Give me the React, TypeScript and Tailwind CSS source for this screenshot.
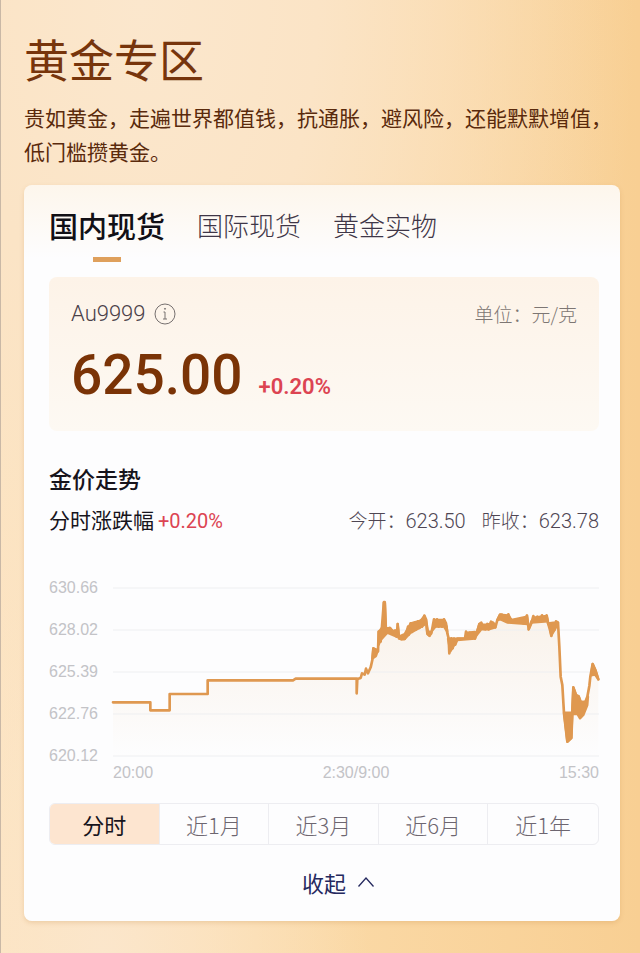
import React, { useState } from 'react';

const MARKETS = ['国内现货', '国际现货', '黄金实物'];
const RANGES = ['分时', '近1月', '近3月', '近6月', '近1年'];
const PRICES = ['630.66', '628.02', '625.39', '622.76', '620.12'];

// Chart units: 1458 wide, 504 high, a grid line every 126
const NIGHT =
  '0,343 112,343 112,367 170,367 170,318 284,318 284,277 540,277 548,272 731,272';

const DAY =
  '731,316 733,273 743,270 747,256 755,260 759,242 765,256 773,238 778,216 781,181 787,190 795,190 797,131 803,161 806,121 811,126 813,42 815,42 818,121 823,131 831,120 839,130 847,128 851,146 854,108 858,151 865,154 875,153 881,136 885,116 887,140 893,106 897,132 905,104 909,124 915,100 919,120 923,98 927,116 931,96 934,83 939,94 943,136 949,142 955,136 957,126 963,94 967,116 972,94 977,116 984,102 987,116 993,94 999,106 1003,136 1007,151 1009,196 1015,151 1019,181 1023,152 1027,170 1033,152 1056,152 1059,131 1065,152 1071,134 1077,152 1083,134 1086,152 1093,131 1099,108 1105,104 1111,122 1117,124 1123,108 1127,124 1134,101 1141,106 1147,118 1153,96 1161,80 1167,80 1171,92 1179,98 1186,79 1193,98 1201,104 1211,98 1217,104 1226,94 1231,106 1239,88 1242,82 1247,124 1255,106 1261,84 1267,98 1273,86 1281,98 1287,82 1293,96 1301,82 1305,106 1311,116 1315,144 1321,106 1324,126 1329,100 1335,104 1339,176 1343,266 1348,291 1353,376 1363,461 1375,450 1378,376 1381,298 1389,321 1397,325 1403,342 1417,342 1423,326 1429,294 1432,266 1439,228 1447,246 1456,274';

// Stretches where the ticks are so dense that the line closes up
const DENSE = [
  '1353,374 1378,374 1375,450 1363,461',
  '1381,298 1389,321 1397,325 1403,342 1417,342 1425,326 1423,351 1411,381 1401,391 1393,378 1377,378',
  '1434,262 1439,228 1447,246 1456,274 1446,260',
  '781,181 795,186 789,204 778,212',
  '797,131 806,121 812,44 816,44 819,121 831,120 839,130 847,128 851,146 823,134 803,156 797,170',
  '854,108 858,151 875,153 893,134 919,120 934,110 934,84 923,98 893,106 875,138 858,146',
  '939,94 945,130 955,132 950,144 943,138',
  '959,126 965,96 993,96 1001,116 1003,132 993,116 967,116',
  '1005,152 1056,152 1062,134 1086,132 1086,152 1033,156 1012,190',
  '1086,148 1099,108 1111,110 1123,110 1141,104 1147,118 1127,124 1105,124',
  '1153,96 1161,80 1186,82 1196,96 1242,86 1245,108 1184,104 1163,94',
  '1247,124 1255,100 1267,88 1301,84 1305,100 1255,104',
  '1305,106 1321,104 1335,104 1327,122 1315,142',
];

const TrendChart: React.FC = () => (
  <svg viewBox="0 0 1458 504" className="block w-full overflow-visible" role="img" aria-label="金价走势">
    <defs>
      <linearGradient id="area" x1="0" y1="0" x2="0" y2="1">
        <stop offset="0" stopColor="#f9f1e8" />
        <stop offset="1" stopColor="#fdfdfe" />
      </linearGradient>
    </defs>
    <polygon points={`0,504 ${NIGHT} ${DAY} 1456,504`} fill="url(#area)" />
    {[0, 126, 252, 378, 504].map((y) => (
      <line key={y} x1="0" x2="1458" y1={y} y2={y} stroke="#eeeff1" strokeWidth="3" />
    ))}
    <g stroke="#df9850" strokeLinejoin="round" strokeLinecap="round">
      <polyline points={`${NIGHT} ${DAY}`} fill="none" strokeWidth="8" />
      {DENSE.map((points) => (
        <polygon key={points} points={points} fill="#df9850" strokeWidth="7" />
      ))}
    </g>
  </svg>
);

const InfoIcon: React.FC = () => (
  <svg width="22" height="22" viewBox="0 0 22 22" fill="none" stroke="#76706f" aria-hidden="true">
    <circle cx="11" cy="11" r="10" />
    <path d="M9.5 9H11v7M9 16h4" />
    <circle cx="11" cy="5.8" r=".5" fill="#76706f" />
  </svg>
);

const App: React.FC = () => {
  const [market, setMarket] = useState(MARKETS[0]);
  const [range, setRange] = useState(RANGES[0]);

  return (
    <main className="min-h-screen border-l border-[#c9b8a6] bg-[radial-gradient(ellipse_at_22%_0%,#fbe7cd_0%,#fbe4c6_25%,transparent_70%),radial-gradient(ellipse_at_16%_100%,#fbe6cb_0%,transparent_35%),linear-gradient(90deg,#fde3bd_0%,#fbdbaa_40%,#f8cf93_100%)] pt-[30px] pr-5 pb-[31px] pl-[23px] font-['Noto_Sans_CJK_SC',sans-serif]">
      <h1 className="text-[45px] leading-[58px] text-[#77350c]">黄金专区</h1>
      <p className="mt-3 text-[21px] leading-[34px] text-[#5a2a0c]">
        贵如黄金，走遍世界都值钱，抗通胀，避风险，还能默默增值，低门槛攒黄金。
      </p>

      <section className="mt-[17px] rounded-lg bg-linear-to-b from-[#fdf6ec] to-[#fdfdfe] to-10% pt-[19px] pr-[21px] pb-6 pl-[25px] shadow-[0_2px_4px_rgba(200,140,70,0.25)]">
        <nav className="flex gap-8">
          {MARKETS.map((name) => (
            <button key={name} type="button" onClick={() => setMarket(name)} className="flex flex-col items-center">
              <span
                className={
                  name === market
                    ? 'text-[29px] leading-[42px] font-medium text-[#111016]'
                    : 'text-[26px] leading-[42px] font-light text-[#3f3647]'
                }
              >
                {name}
              </span>
              {name === market && <span className="mt-[11px] h-[5px] w-7 bg-[#dfa05c]" />}
            </button>
          ))}
        </nav>

        <div className="mt-[15px] rounded-lg bg-linear-to-b from-[#fdf3e8] to-[#fdf9f3] px-[22px] pt-[22px] pb-[26px]">
          <div className="flex items-center justify-between leading-[30px] font-light">
            <span className="flex items-center gap-2 font-[Roboto,sans-serif] text-[22px] text-[#4a4048]">
              Au9999
              <InfoIcon />
            </span>
            <span className="text-[19px] text-[#7d7673]">单位：元/克</span>
          </div>
          <div className="mt-4 flex h-[60px] items-baseline gap-4 font-[Roboto,sans-serif] leading-[60px]">
            <strong className="text-[55px] font-medium text-[#7a3306]">625.00</strong>
            <span className="text-[22px] font-semibold text-[#dc4452]">+0.20%</span>
          </div>
        </div>

        <h2 className="mt-8 text-[23px] leading-[30px] font-medium text-[#17141c]">金价走势</h2>
        <div className="mt-[11px] flex items-center justify-between leading-[30px]">
          <p className="text-[21px] text-[#17141c]">
            分时涨跌幅
            <span className="ml-1 font-[Roboto,sans-serif] text-[20px] text-[#dc4452]">+0.20%</span>
          </p>
          <p className="flex gap-4 text-[19px] font-light text-[#4f4653]">
            <span>
              今开：<span className="font-[Roboto,sans-serif] text-[20px]">623.50</span>
            </span>
            <span>
              昨收：<span className="font-[Roboto,sans-serif] text-[20px]">623.78</span>
            </span>
          </p>
        </div>

        <div className="mt-[52px] flex font-['Liberation_Sans',sans-serif] text-base text-[#c3c3c7]">
          <div className="-my-2 flex w-16 shrink-0 flex-col justify-between leading-4">
            {PRICES.map((price) => (
              <span key={price}>{price}</span>
            ))}
          </div>
          <div className="flex-1">
            <TrendChart />
          </div>
        </div>
        <div className="mt-[7px] flex justify-between pl-16 font-['Liberation_Sans',sans-serif] text-base leading-5 text-[#c3c3c7]">
          <span>20:00</span>
          <span>2:30/9:00</span>
          <span>15:30</span>
        </div>

        <div className="mt-5 grid grid-cols-5 divide-x divide-[#ededf1] overflow-hidden rounded-md border border-[#ededf1] text-[22px] leading-10">
          {RANGES.map((name) => (
            <button
              key={name}
              type="button"
              onClick={() => setRange(name)}
              className={name === range ? 'bg-[#fde5d0] text-[#17141c]' : 'font-light text-[#6d6670]'}
            >
              {name}
            </button>
          ))}
        </div>

        <button type="button" className="mx-auto mt-[22px] flex items-center gap-3 pl-7 text-[22px] leading-[30px] text-[#25295f]">
          收起
          <svg width="16" height="10" viewBox="0 0 16 10" fill="none" stroke="currentColor" strokeWidth="1.3" aria-hidden="true">
            <path d="M.5 9.5 8 1l7.5 8.5" />
          </svg>
        </button>
      </section>
    </main>
  );
};

export default App;
